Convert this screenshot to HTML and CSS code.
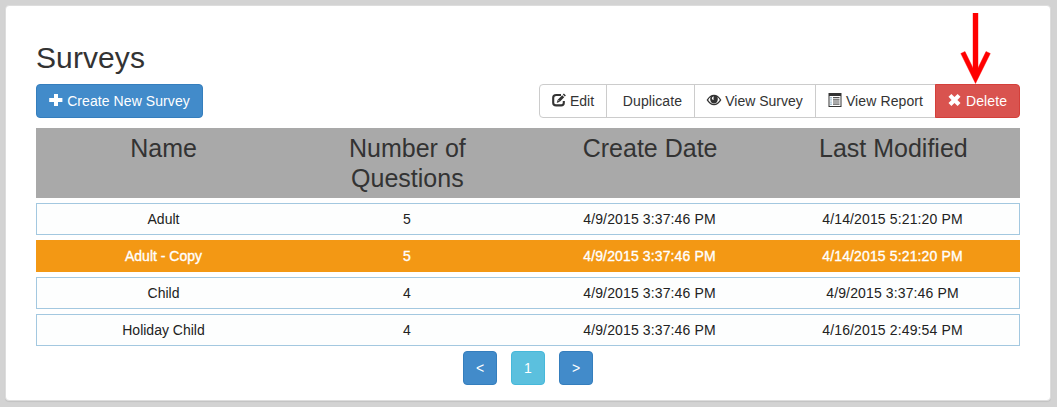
FILE: index.html
```html
<!DOCTYPE html>
<html lang="en">
<head>
<meta charset="utf-8">
<title>Surveys</title>
<link rel="stylesheet" href="styles.css">
</head>
<body>
<main class="panel">
  <h2 class="title">Surveys</h2>
  <div class="toolbar">
    <button class="btn btn-primary create"><svg class="icon" viewBox="0 0 14 14"><path d="M5 1h4v4h4.4v4H9v4H5V9H.2V5H5z"/></svg><span>Create New Survey</span></button>
    <div class="group">
      <button class="btn edit"><svg class="icon" viewBox="0 0 14 14"><path d="M9 2H4.2Q1.2 2 1.2 4.7v5Q1.2 12.4 4.2 12.4h4.9q2.7 0 2.7-2.7V8" fill="none" stroke="currentColor" stroke-width="2.1"/><path d="M4.7 10l1-3.2L10.2 2.2l2 2L7.8 8.8zM10.8 1.5l1.1-1.1 2 2-1.1 1.1z"/><path d="M6.2 7l1.5 1.5" stroke="#fff" stroke-width=".5"/></svg><span>Edit</span></button>
      <button class="btn duplicate"><span>Duplicate</span></button>
      <button class="btn view"><svg class="icon" viewBox="0 0 14 14"><path fill-rule="evenodd" d="M-.4 7Q2.8 1.7 7 1.7T14.4 7Q11.2 12.3 7 12.3T-.4 7zm1.6 0Q3.8 10.9 7 10.9T12.8 7Q11.9 5.2 10.3 4.1 11.3 6 10.6 7.6A3.7 3.7 0 0 1 3.4 7.6Q2.7 5.7 3.7 4.1 2.1 5.2 1.2 7zM4.8 5.3Q4.9 7 6.8 6.8 5.9 5 7 3.6 5 3.5 4.8 5.3z"/></svg><span>View Survey</span></button>
      <button class="btn report"><svg class="icon" viewBox="0 0 14 14"><path d="M.5 0h13v14H.5z"/><path fill="#fff" d="M1.5 3h11v10h-11z"/><path fill="#a9c3d3" d="M2 4h2v1.4H2zm0 2.2h2v1.4H2zm0 2.2h2v1.4H2zm0 2.2h2V12H2z"/><path fill="#555" d="M5 4h6.5v1.2H5zm0 2.2h6.5v1.2H5zm0 2.2h6.5v1.2H5zm0 2.2h6.5v1.2H5z"/></svg><span>View Report</span></button>
      <button class="btn btn-danger delete"><svg class="icon" viewBox="0 0 14 14"><path d="M3.4.9L6.5 4 9.6.9l2.9 2.9L9.4 7l3.1 3.1L9.6 13 6.5 9.9 3.4 13 .5 10.1 3.6 7 .5 3.8z"/></svg><span>Delete</span></button>
    </div>
  </div>
  <div class="grid">
    <div class="row head"><div>Name</div><div>Number of Questions</div><div>Create Date</div><div>Last Modified</div></div>
    <div class="row"><div>Adult</div><div>5</div><div>4/9/2015 3:37:46 PM</div><div>4/14/2015 5:21:20 PM</div></div>
    <div class="row selected"><div>Adult - Copy</div><div>5</div><div>4/9/2015 3:37:46 PM</div><div>4/14/2015 5:21:20 PM</div></div>
    <div class="row"><div>Child</div><div>4</div><div>4/9/2015 3:37:46 PM</div><div>4/9/2015 3:37:46 PM</div></div>
    <div class="row"><div>Holiday Child</div><div>4</div><div>4/9/2015 3:37:46 PM</div><div>4/16/2015 2:49:54 PM</div></div>
  </div>
  <nav class="pager">
    <button class="btn btn-primary">&lt;</button>
    <button class="btn btn-info">1</button>
    <button class="btn btn-primary">&gt;</button>
  </nav>
</main>
<svg class="arrow" viewBox="0 0 32 72"><path d="M13 0h5v55l8-16.5 4.3 2L15.5 70.5.8 40.5l4.2-2L13 55z" fill="#f00" stroke="#f00" stroke-width=".4"/></svg>
</body>
</html>
```
FILE: styles.css
```css
* { box-sizing: border-box; }
body {
  margin: 0;
  height: 407px;
  padding: 5px 6px 6px 5px;
  overflow: hidden;
  background: #d3d3d3;
  color: #333;
  font: 14px/20px "Liberation Sans", Arial, sans-serif;
}
.panel {
  height: 396px;
  padding: 35px 30px 0;
  background: #fff;
  border: 1px solid #ddd;
  border-radius: 4px;
  box-shadow: 0 1px 1px rgba(0, 0, 0, .08);
}
.title {
  margin: 0 0 10px;
  font-size: 30px;
  font-weight: 400;
  line-height: 33px;
  letter-spacing: .1px;
}
.toolbar {
  display: flex;
  justify-content: space-between;
  margin-bottom: 10px;
}
.group { display: flex; }
.btn {
  display: flex;
  align-items: center;
  justify-content: center;
  gap: 4px;
  height: 34px;
  padding: 0;
  border: 1px solid #ccc;
  border-radius: 4px;
  background: #fff;
  color: #333;
  font: inherit;
  white-space: nowrap;
}
.icon {
  width: 14px;
  height: 14px;
  flex: none;
  margin-bottom: 2px;
  overflow: visible;
  fill: currentColor;
}
.btn-primary { background: #428bca; border-color: #357ebd; color: #fff; }
.btn-info { background: #5bc0de; border-color: #46b8da; color: #fff; }
.btn-danger { background: #d9534f; border-color: #d43f3a; color: #fff; }
.create { width: 167px; letter-spacing: .08px; }
.group .btn { border-radius: 0; margin-left: -1px; }
.group .edit { width: 68px; margin-left: 0; border-radius: 4px 0 0 4px; }
.duplicate { width: 89px; padding-left: 4px; letter-spacing: .1px; }
.view { width: 122px; }
.report { width: 121px; letter-spacing: .1px; }
.group .delete { width: 85px; border-radius: 0 4px 4px 0; letter-spacing: .1px; }
.grid { display: flex; flex-direction: column; gap: 5px; }
.row {
  display: grid;
  grid-template-columns: repeat(4, 1fr);
  height: 32px;
  padding: 5px;
  border: 1px solid #a3c8e0;
  background: #fdfefe;
  color: #222;
  text-align: center;
  letter-spacing: .13px;
}
.row > div { padding: 0 15px; }
.row > div:first-child { letter-spacing: 0; }
.row > div:nth-child(2) { padding-left: 16px; }
.head {
  height: 70px;
  padding: 4px 4px 5px 5px;
  border-color: #a9a9a9;
  background: #a9a9a9;
  color: #333;
  font-size: 25px;
  line-height: 30px;
  letter-spacing: 0;
}
.selected {
  border-color: #f39814;
  background: #f39814;
  color: #fff;
  -webkit-text-stroke: .35px #fff;
}
.pager {
  display: flex;
  justify-content: center;
  gap: 14px;
  margin-top: 5px;
}
.pager .btn { width: 34px; }
.arrow {
  position: absolute;
  left: 960px;
  top: 13px;
  width: 32px;
  height: 72px;
}
```
